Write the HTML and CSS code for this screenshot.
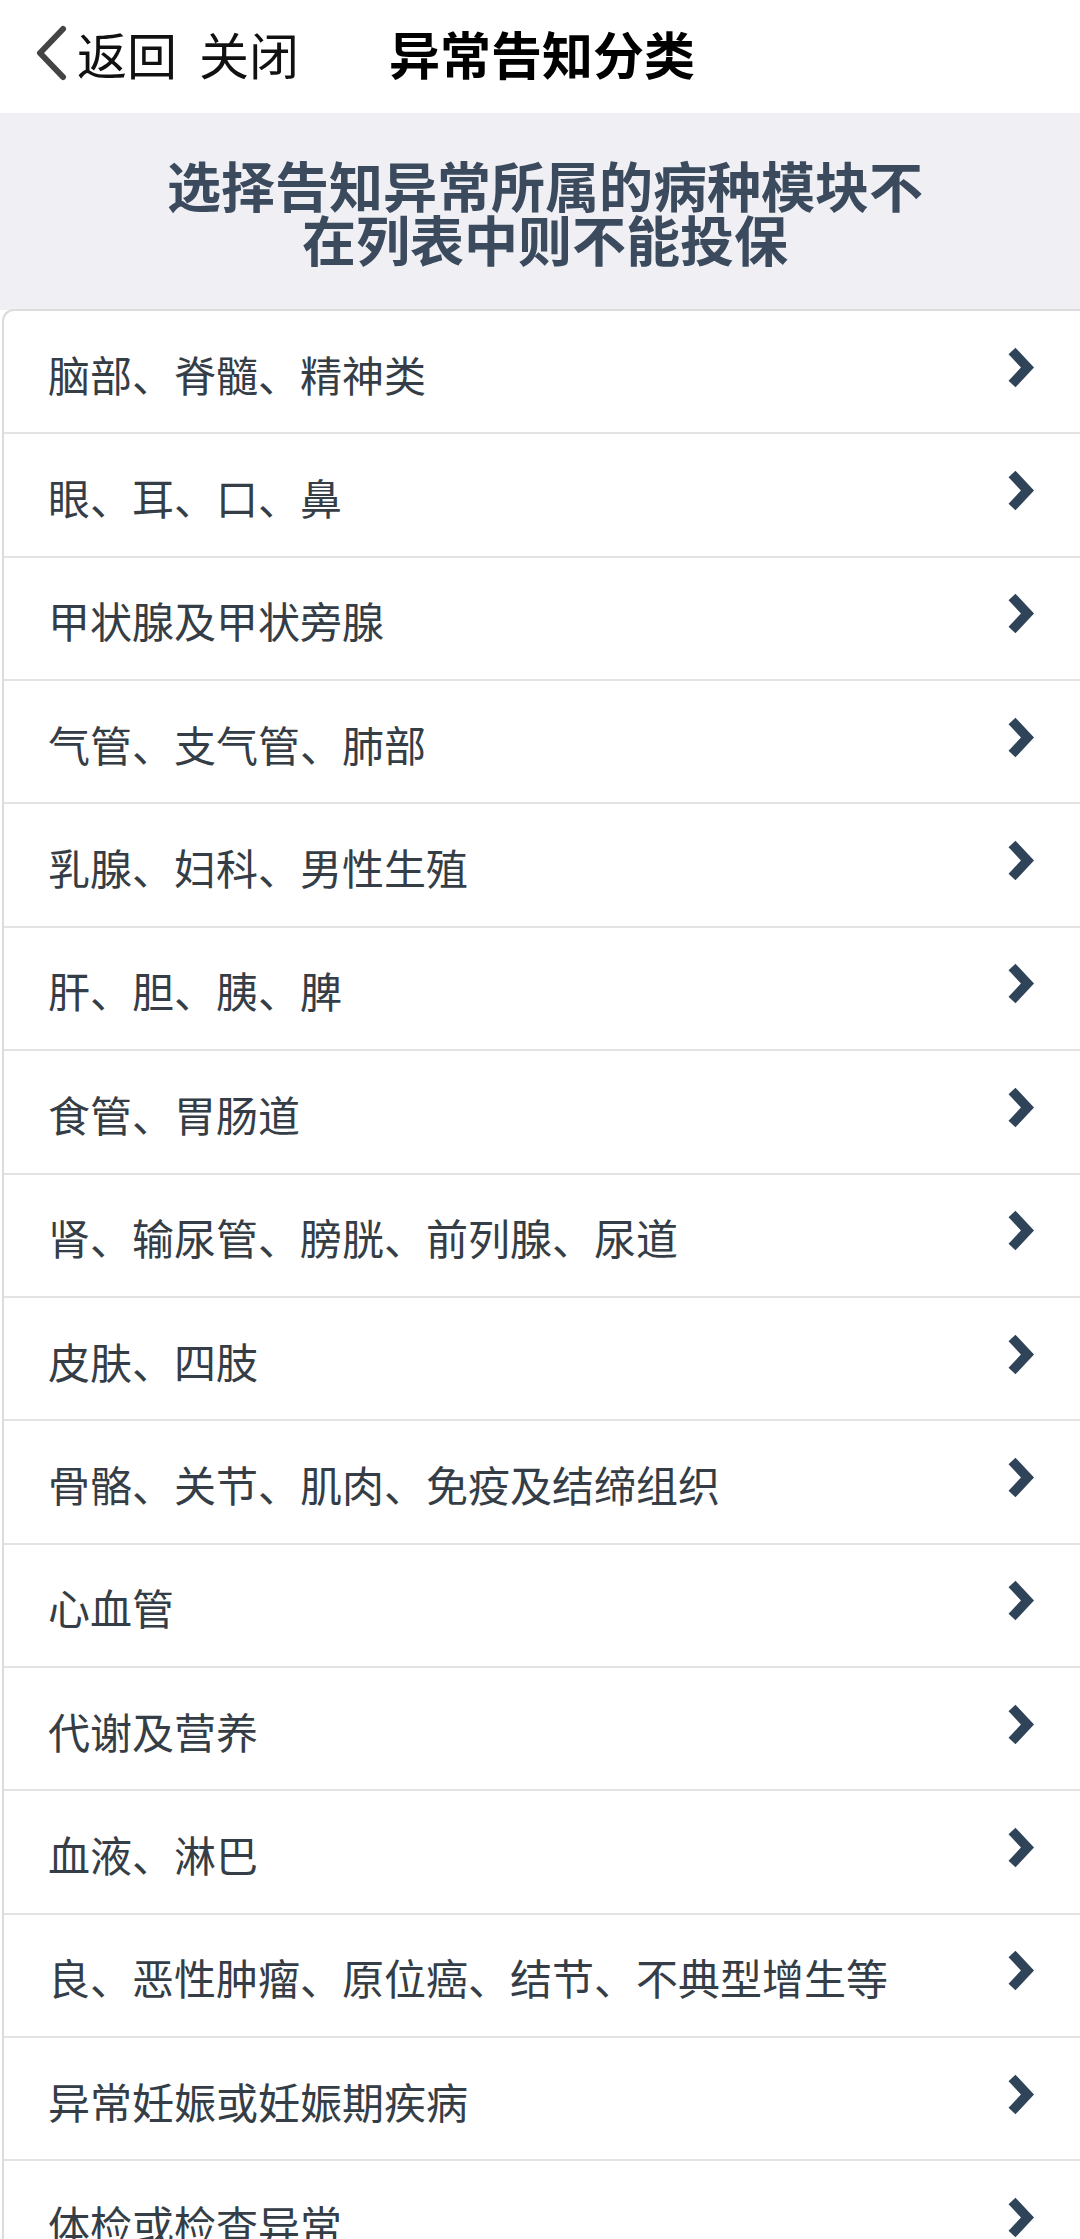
FILE: index.html
```html
<!DOCTYPE html>
<html lang="zh-CN">
<head>
<meta charset="utf-8">
<title>异常告知分类</title>
<link rel="stylesheet" href="styles.css">
</head>
<body>
<header class="nav">
  <span class="back">
    <svg class="back-icon" width="34" height="56" viewBox="0 0 34 56"><polyline points="29,4 6,28 29,52" fill="none" stroke="#444" stroke-width="6" stroke-linecap="round" stroke-linejoin="round"/></svg>
    <span class="nav-link">返回</span>
  </span>
  <span class="nav-link close">关闭</span>
  <span class="nav-title">异常告知分类</span>
</header>
<section class="intro">
  <h1 class="intro-text">选择告知异常所属的病种模块不在列表中则不能投保</h1>
</section>
<ul class="list">
  <li class="row"><span class="row-text">脑部、脊髓、精神类</span><svg class="chev" width="32" height="42" viewBox="0 0 32 42"><polyline points="4,4 19.5,20.5 4,37" fill="none" stroke="#2f4359" stroke-width="9.5"/></svg></li>
  <li class="row"><span class="row-text">眼、耳、口、鼻</span><svg class="chev" width="32" height="42" viewBox="0 0 32 42"><polyline points="4,4 19.5,20.5 4,37" fill="none" stroke="#2f4359" stroke-width="9.5"/></svg></li>
  <li class="row"><span class="row-text">甲状腺及甲状旁腺</span><svg class="chev" width="32" height="42" viewBox="0 0 32 42"><polyline points="4,4 19.5,20.5 4,37" fill="none" stroke="#2f4359" stroke-width="9.5"/></svg></li>
  <li class="row"><span class="row-text">气管、支气管、肺部</span><svg class="chev" width="32" height="42" viewBox="0 0 32 42"><polyline points="4,4 19.5,20.5 4,37" fill="none" stroke="#2f4359" stroke-width="9.5"/></svg></li>
  <li class="row"><span class="row-text">乳腺、妇科、男性生殖</span><svg class="chev" width="32" height="42" viewBox="0 0 32 42"><polyline points="4,4 19.5,20.5 4,37" fill="none" stroke="#2f4359" stroke-width="9.5"/></svg></li>
  <li class="row"><span class="row-text">肝、胆、胰、脾</span><svg class="chev" width="32" height="42" viewBox="0 0 32 42"><polyline points="4,4 19.5,20.5 4,37" fill="none" stroke="#2f4359" stroke-width="9.5"/></svg></li>
  <li class="row"><span class="row-text">食管、胃肠道</span><svg class="chev" width="32" height="42" viewBox="0 0 32 42"><polyline points="4,4 19.5,20.5 4,37" fill="none" stroke="#2f4359" stroke-width="9.5"/></svg></li>
  <li class="row"><span class="row-text">肾、输尿管、膀胱、前列腺、尿道</span><svg class="chev" width="32" height="42" viewBox="0 0 32 42"><polyline points="4,4 19.5,20.5 4,37" fill="none" stroke="#2f4359" stroke-width="9.5"/></svg></li>
  <li class="row"><span class="row-text">皮肤、四肢</span><svg class="chev" width="32" height="42" viewBox="0 0 32 42"><polyline points="4,4 19.5,20.5 4,37" fill="none" stroke="#2f4359" stroke-width="9.5"/></svg></li>
  <li class="row"><span class="row-text">骨骼、关节、肌肉、免疫及结缔组织</span><svg class="chev" width="32" height="42" viewBox="0 0 32 42"><polyline points="4,4 19.5,20.5 4,37" fill="none" stroke="#2f4359" stroke-width="9.5"/></svg></li>
  <li class="row"><span class="row-text">心血管</span><svg class="chev" width="32" height="42" viewBox="0 0 32 42"><polyline points="4,4 19.5,20.5 4,37" fill="none" stroke="#2f4359" stroke-width="9.5"/></svg></li>
  <li class="row"><span class="row-text">代谢及营养</span><svg class="chev" width="32" height="42" viewBox="0 0 32 42"><polyline points="4,4 19.5,20.5 4,37" fill="none" stroke="#2f4359" stroke-width="9.5"/></svg></li>
  <li class="row"><span class="row-text">血液、淋巴</span><svg class="chev" width="32" height="42" viewBox="0 0 32 42"><polyline points="4,4 19.5,20.5 4,37" fill="none" stroke="#2f4359" stroke-width="9.5"/></svg></li>
  <li class="row"><span class="row-text">良、恶性肿瘤、原位癌、结节、不典型增生等</span><svg class="chev" width="32" height="42" viewBox="0 0 32 42"><polyline points="4,4 19.5,20.5 4,37" fill="none" stroke="#2f4359" stroke-width="9.5"/></svg></li>
  <li class="row"><span class="row-text">异常妊娠或妊娠期疾病</span><svg class="chev" width="32" height="42" viewBox="0 0 32 42"><polyline points="4,4 19.5,20.5 4,37" fill="none" stroke="#2f4359" stroke-width="9.5"/></svg></li>
  <li class="row"><span class="row-text">体检或检查异常</span><svg class="chev" width="32" height="42" viewBox="0 0 32 42"><polyline points="4,4 19.5,20.5 4,37" fill="none" stroke="#2f4359" stroke-width="9.5"/></svg></li>
</ul>
</body>
</html>
```

FILE: styles.css
```css
html, body {
  margin: 0;
  padding: 0;
  background: #ffffff;
  overflow: hidden;
}
body {
  font-family: "Noto Sans CJK SC", "Noto Sans", sans-serif;
  width: 1080px;
}
.nav {
  height: 113px;
  display: flex;
  align-items: center;
  padding-left: 34px;
  padding-bottom: 8px;
  box-sizing: border-box;
  background: #ffffff;
}
.back {
  display: flex;
  align-items: center;
}
.back-icon {
  display: block;
  margin-right: 9px;
}
.nav-link {
  font-size: 50px;
  line-height: 56px;
  color: #111111;
}
.close {
  margin-left: 22px;
}
.nav-title {
  margin-left: 90px;
  font-size: 51px;
  line-height: 56px;
  font-weight: 700;
  color: #000000;
}
.intro {
  background: #efeff4;
  padding: 45px 145px 44px 155px;
}
.intro-text {
  margin: 0;
  font-size: 54px;
  line-height: 54px;
  font-weight: 700;
  color: #3b4b5d;
  text-align: center;
}
.list {
  list-style: none;
  margin: -1px -20px 0 2px;
  padding: 0;
  background: #ffffff;
  border-top: 2px solid #dcdcdc;
  border-left: 2px solid #dcdcdc;
  border-top-left-radius: 12px;
  position: relative;
}
.row {
  height: 123.36px;
  box-sizing: border-box;
  border-bottom: 2px solid #e3e3e3;
  display: flex;
  align-items: center;
  padding-left: 44px;
  padding-right: 60px;
}
.row-text {
  flex: 1;
  font-size: 42px;
  line-height: 50px;
  color: #353d46;
  padding-top: 4px;
}
.chev {
  display: block;
  margin-bottom: 8px;
}
```
